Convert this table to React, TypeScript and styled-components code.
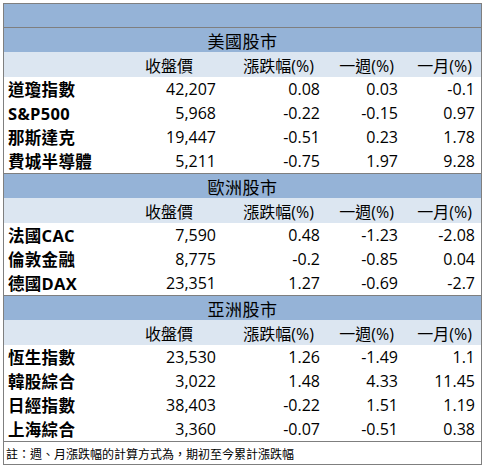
import React from 'react';
import styled, { createGlobalStyle } from 'styled-components';

const GlobalStyle = createGlobalStyle`
  body {
    margin: 0;
    background: #ffffff;
    font-family: "Open Sans", "Noto Sans CJK TC", sans-serif;
    color: #000;
  }
`;

type Col = { numPad: number; headPad: number };

const COLS: Col[] = [
  { numPad: 0, headPad: 0 },
  { numPad: 3, headPad: 26 },
  { numPad: 3, headPad: 9 },
  { numPad: 3, headPad: 7 },
  { numPad: 6, headPad: 9 },
];

const Sheet = styled.div`
  margin: 3px 0 0 3px;
  width: 477px;
  border: 1px solid #7f7f7f;
  display: grid;
  grid-template-columns: 116px 99px 104px 78px 80px;
`;

const BlankBand = styled.div`
  grid-column: 1 / -1;
  height: 23px;
  background: #95b3d7;
`;

const SectionTitle = styled.div`
  grid-column: 1 / -1;
  height: 24px;
  border-top: 1px solid #7f7f7f;
  background: #95b3d7;
  display: flex;
  align-items: center;
  justify-content: center;
  font-family: "Noto Sans CJK TC", sans-serif;
  font-size: 17px;
  letter-spacing: 0.5px;
`;

const HeadCell = styled.div<{ $pr: number }>`
  height: 25px;
  background: #dce6f1;
  display: flex;
  align-items: center;
  justify-content: flex-end;
  padding-right: ${(p) => p.$pr}px;
  font-family: "Open Sans", "Noto Sans CJK TC", sans-serif;
  font-size: 16px;
  white-space: nowrap;
`;

const NameCell = styled.div`
  height: 24px;
  display: flex;
  align-items: center;
  padding-left: 4px;
  font-family: "Open Sans", "Noto Sans CJK TC", sans-serif;
  font-weight: 700;
  font-size: 16.5px;
  letter-spacing: 0.3px;
  white-space: nowrap;
`;

const NumCell = styled.div<{ $pr: number }>`
  height: 24px;
  display: flex;
  align-items: center;
  justify-content: flex-end;
  padding-right: ${(p) => p.$pr}px;
  font-size: 16px;
  white-space: nowrap;
`;

const Footer = styled.div`
  grid-column: 1 / -1;
  height: 22px;
  border-top: 1px solid #7f7f7f;
  display: flex;
  align-items: center;
  padding-left: 2px;
  font-family: "Noto Sans CJK TC", sans-serif;
  font-size: 12px;
`;

type Row = [string, string, string, string, string];

const SECTIONS: { title: string; rows: Row[] }[] = [
  {
    title: '美國股市',
    rows: [
      ['道瓊指數', '42,207', '0.08', '0.03', '-0.1'],
      ['S&P500', '5,968', '-0.22', '-0.15', '0.97'],
      ['那斯達克', '19,447', '-0.51', '0.23', '1.78'],
      ['費城半導體', '5,211', '-0.75', '1.97', '9.28'],
    ],
  },
  {
    title: '歐洲股市',
    rows: [
      ['法國CAC', '7,590', '0.48', '-1.23', '-2.08'],
      ['倫敦金融', '8,775', '-0.2', '-0.85', '0.04'],
      ['德國DAX', '23,351', '1.27', '-0.69', '-2.7'],
    ],
  },
  {
    title: '亞洲股市',
    rows: [
      ['恆生指數', '23,530', '1.26', '-1.49', '1.1'],
      ['韓股綜合', '3,022', '1.48', '4.33', '11.45'],
      ['日經指數', '38,403', '-0.22', '1.51', '1.19'],
      ['上海綜合', '3,360', '-0.07', '-0.51', '0.38'],
    ],
  },
];

const HEADERS = ['', '收盤價', '漲跌幅(%)', '一週(%)', '一月(%)'];

const App: React.FC = () => {
  return (
    <>
      <GlobalStyle />
      <Sheet>
        <BlankBand />
        {SECTIONS.map((s) => (
          <React.Fragment key={s.title}>
            <SectionTitle>{s.title}</SectionTitle>
            {HEADERS.map((h, i) => (
              <HeadCell key={i} $pr={COLS[i].headPad}>
                {h}
              </HeadCell>
            ))}
            {s.rows.map((r) => (
              <React.Fragment key={r[0]}>
                <NameCell>{r[0]}</NameCell>
                {r.slice(1).map((v, i) => (
                  <NumCell key={i} $pr={COLS[i + 1].numPad}>
                    {v}
                  </NumCell>
                ))}
              </React.Fragment>
            ))}
          </React.Fragment>
        ))}
        <Footer>註：週、月漲跌幅的計算方式為，期初至今累計漲跌幅</Footer>
      </Sheet>
    </>
  );
};

export default App;
